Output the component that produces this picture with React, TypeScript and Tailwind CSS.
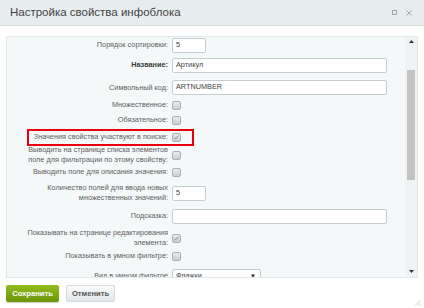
import React from "react";

function Check({ checked = false }: { checked?: boolean }) {
  return (
    <div className="relative w-[9px] h-[9px] rounded-[2px] border border-[#a9b0b5] bg-gradient-to-b from-[#e9ecee] to-[#c8cdd1]">
      {checked && (
        <svg viewBox="0 0 9 9" className="absolute left-0 top-0 w-[7px] h-[7px]">
          <path d="M1.5 4.5 L3.3 6.3 L7 2" fill="none" stroke="#737b81" strokeWidth="1.1" />
        </svg>
      )}
    </div>
  );
}

function Row({
  h,
  label,
  bold = false,
  children,
}: {
  h: string;
  label: React.ReactNode;
  bold?: boolean;
  children: React.ReactNode;
}) {
  return (
    <div className={`flex items-center ${h}`}>
      <div
        className={`w-[161px] text-right leading-[10px] ${bold ? "font-bold text-[#3a3a3a]" : "text-[#5e5e5e]"}`}
      >
        {label}
      </div>
      <div className="ml-[4px] flex items-center">{children}</div>
    </div>
  );
}

function Input({ w, value }: { w: string; value?: string }) {
  return (
    <div
      className={`${w} h-[15px] bg-white border border-[#c6cdd2] rounded-[2px] flex items-center pl-[3px] text-[7.3px] text-[#444]`}
    >
      {value}
    </div>
  );
}

export default function App() {
  return (
    <div
      className="w-[424px] h-[308px] bg-white flex flex-col relative overflow-hidden text-[7.3px]"
      style={{ fontFamily: '"Liberation Sans", Arial, sans-serif' }}
    >
      <div className="h-[26px] bg-[#e7ecee] border-b border-[#d3d9dc] flex items-center justify-between pl-[10px] pr-[12px]">
        <div className="text-[11.5px] text-[#444]">Настройка свойства инфоблока</div>
        <div className="flex items-center gap-[9px]">
          <div className="w-[5px] h-[5px] border border-[#a0a8ad]" />
          <svg viewBox="0 0 6 6" className="w-[6px] h-[6px]">
            <path d="M0.5 0.5 L5.5 5.5 M5.5 0.5 L0.5 5.5" stroke="#a0a8ad" strokeWidth="1" />
          </svg>
        </div>
      </div>

      <div className="px-[6px] pt-[10px]">
        <div className="h-[242px] w-[412px] border border-[#e3e8ea] bg-[#f5f8f9] flex">
          <div className="flex-1 overflow-hidden relative">
            <div className="flex flex-col">
              <Row h="h-[16px]" label="Порядок сортировки:">
                <Input w="w-[34px]" value="5" />
              </Row>
              <Row h="h-[24px]" label="Название:" bold>
                <Input w="w-[215px]" value="Артикул" />
              </Row>
              <Row h="h-[21px]" label="Символьный код:">
                <Input w="w-[215px]" value="ARTNUMBER" />
              </Row>
              <Row h="h-[14px]" label="Множественное:">
                <Check />
              </Row>
              <Row h="h-[16px]" label="Обязательное:">
                <Check />
              </Row>
              <Row h="h-[18px]" label="Значения свойства участвуют в поиске:">
                <Check checked />
              </Row>
              <Row
                h="h-[18px]"
                label={
                  <>
                    Выводить на странице списка элементов
                    <br />
                    поле для фильтрации по этому свойству:
                  </>
                }
              >
                <Check />
              </Row>
              <Row h="h-[16px]" label="Выводить поле для описания значения:">
                <Check />
              </Row>
              <Row
                h="h-[26px]"
                label={
                  <>
                    Количество полей для ввода новых
                    <br />
                    множественных значений:
                  </>
                }
              >
                <Input w="w-[34px]" value="5" />
              </Row>
              <Row h="h-[20px]" label="Подсказка:">
                <Input w="w-[215px]" />
              </Row>
              <Row
                h="h-[24px]"
                label={
                  <>
                    Показывать на странице редактирования
                    <br />
                    элемента:
                  </>
                }
              >
                <Check checked />
              </Row>
              <Row h="h-[12px]" label="Показывать в умном фильтре:">
                <Check />
              </Row>
              <Row h="h-[28px]" label="Вид в умном фильтре">
                <div className="w-[89px] h-[15px] bg-white border border-[#c6cdd2] rounded-[2px] flex items-center justify-between pl-[3px] pr-[4px] text-[7.3px] text-[#444]">
                  <span>Флажки</span>
                  <span className="text-[6px] text-[#222]">▼</span>
                </div>
              </Row>
            </div>
            <div className="absolute left-[20px] top-[92px] w-[167px] h-[17px] border-2 border-solid border-red-600" />
          </div>
          <div className="w-[12px] bg-[#f1f2f3] flex flex-col items-center">
            <svg viewBox="0 0 5 3" className="w-[5px] h-[3px] mt-[3px]">
              <path d="M0 3 L2.5 0 L5 3 Z" fill="#333" />
            </svg>
            <div className="w-[8px] h-[110px] bg-[#c3c3c3] mt-[27px]" />
            <div className="flex-1" />
            <svg viewBox="0 0 5 3" className="w-[5px] h-[3px] mb-[4px]">
              <path d="M0 0 L2.5 3 L5 0 Z" fill="#333" />
            </svg>
          </div>
        </div>
      </div>

      <div className="flex items-center gap-[7px] px-[6px] mt-[7px]">
        <div className="w-[53px] h-[17px] rounded-[2px] bg-gradient-to-b from-[#93bd1c] to-[#6c9509] text-white font-bold text-[7.6px] flex items-center justify-center shadow-[0_1px_1px_rgba(0,0,0,0.2)]">
          Сохранить
        </div>
        <div className="w-[49px] h-[17px] rounded-[2px] bg-gradient-to-b from-[#fbfbfb] to-[#e3e6e8] border border-[#d6dadd] text-[#555] font-bold text-[7.6px] flex items-center justify-center">
          Отменить
        </div>
      </div>

      <svg viewBox="0 0 7 7" className="absolute right-[3px] bottom-[2px] w-[7px] h-[7px]">
        <path d="M6.5 1 L1 6.5 M6.5 3.5 L3.5 6.5 M6.5 5.5 L5.5 6.5" stroke="#c8c8c8" strokeWidth="0.8" />
      </svg>
    </div>
  );
}
